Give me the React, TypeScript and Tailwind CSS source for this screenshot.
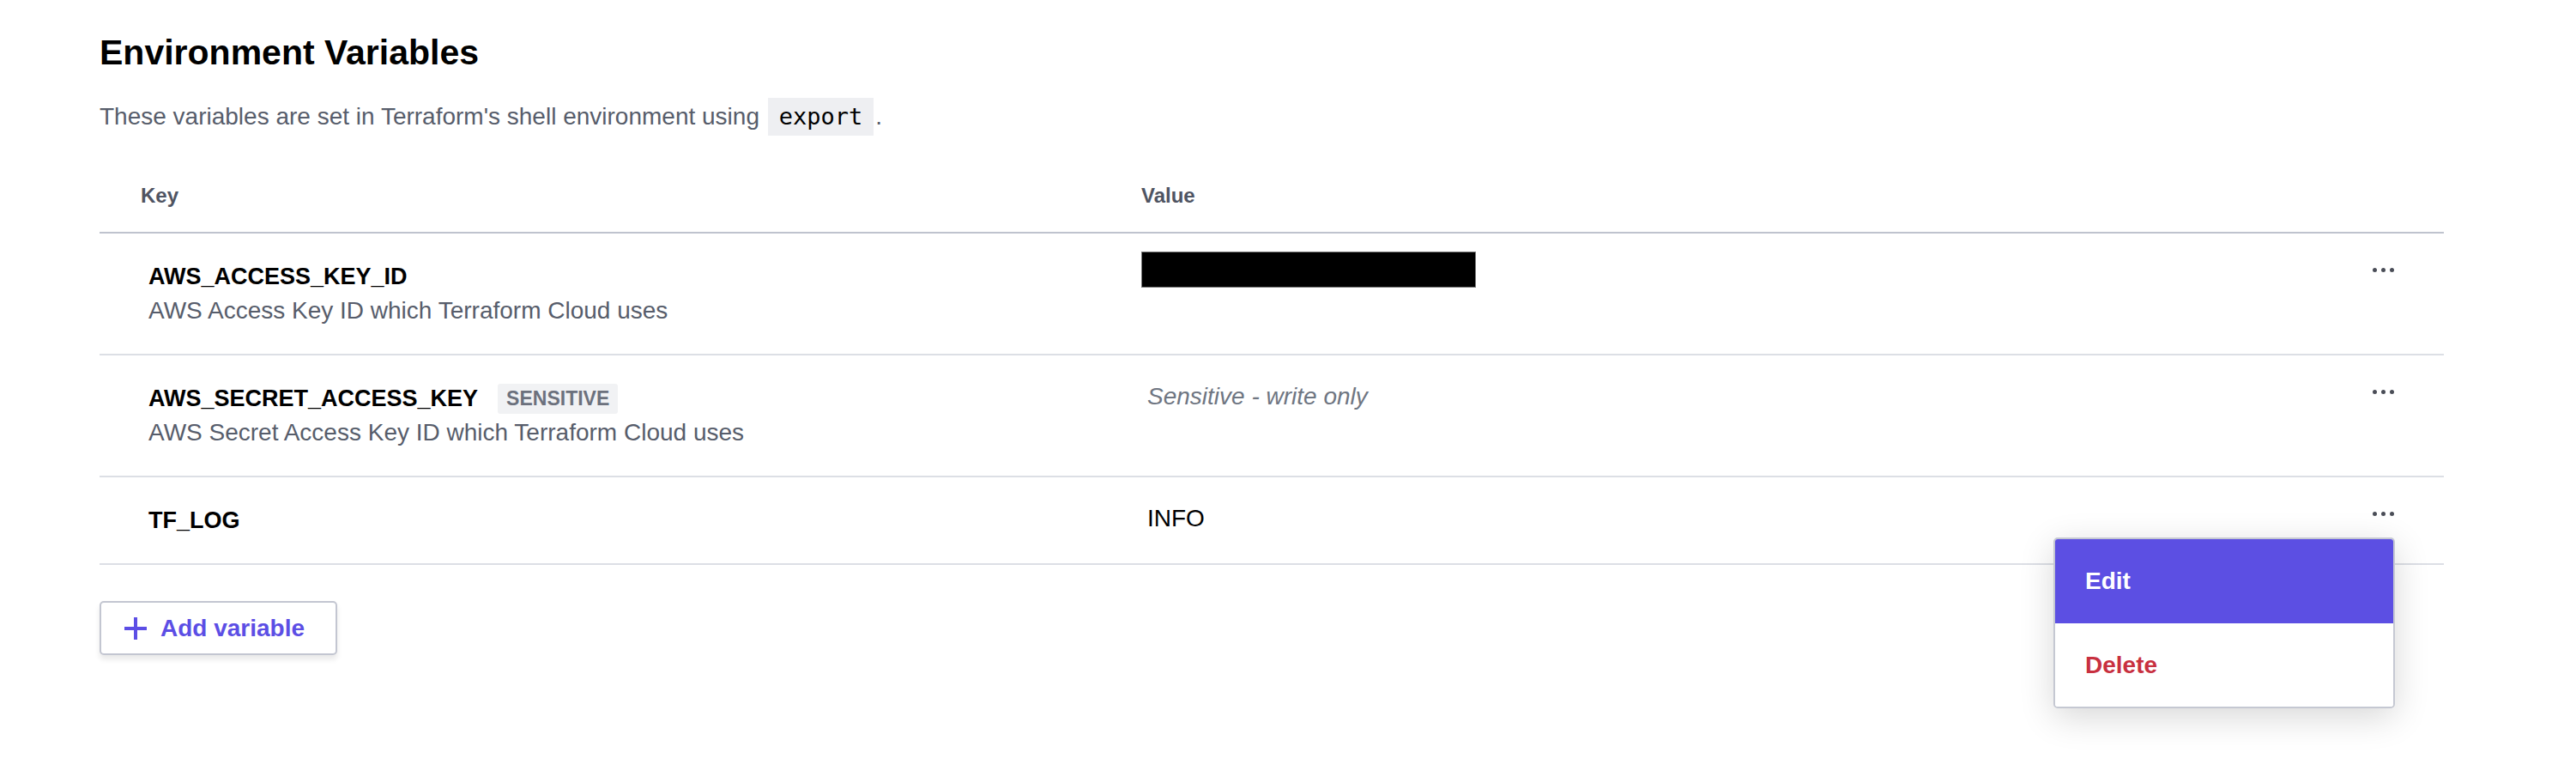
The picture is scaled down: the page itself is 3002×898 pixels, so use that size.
import React from "react";

const FONT = { fontFamily: '"Liberation Sans", Arial, Helvetica, sans-serif' };

function Dots() {
  return (
    <div className="flex items-center gap-[5px]">
      <span className="block w-[5px] h-[5px] rounded-full bg-[#4a4d57]" />
      <span className="block w-[5px] h-[5px] rounded-full bg-[#4a4d57]" />
      <span className="block w-[5px] h-[5px] rounded-full bg-[#4a4d57]" />
    </div>
  );
}

function Row({
  name,
  desc,
  badge,
  value,
  menu,
}: {
  name: string;
  desc?: string;
  badge?: boolean;
  value: React.ReactNode;
  menu?: boolean;
}) {
  return (
    <div className="flex border-b-2 border-[#dcdfe5]">
      <div className="w-[1214px] pl-[57px] py-[30px]">
        <div className="flex items-center h-[40px]">
          <span className="text-[27px] leading-[40px] font-bold text-black">{name}</span>
          {badge && (
            <span className="ml-[23px] h-[35px] px-[10px] flex items-center rounded-[3px] bg-[#f1f2f4] text-[23px] font-bold text-[#6c717d]">
              SENSITIVE
            </span>
          )}
        </div>
        {desc && <div className="text-[28px] leading-[40px] text-[#575d6b]">{desc}</div>}
      </div>
      <div className="flex-1 pt-[28px]">{value}</div>
      <div className="relative w-[140px] pt-[40px] pr-[58px] flex justify-end items-start">
        <Dots />
        {menu && (
          <div className="absolute top-[70px] right-[57px] w-[398px] bg-white border-2 border-[#c5c8d2] rounded-[5px] overflow-hidden shadow-[0_10px_40px_rgba(0,0,0,0.16)] z-10">
            <div className="h-[98px] flex items-center pl-[35px] bg-[#5c4fe3] text-white text-[28px] font-bold">
              Edit
            </div>
            <div className="h-[97px] flex items-center pl-[35px] bg-white text-[#c8303f] text-[28px] font-bold">
              Delete
            </div>
          </div>
        )}
      </div>
    </div>
  );
}

export default function App() {
  return (
    <div className="w-[3002px] h-[898px] bg-white overflow-hidden" style={FONT}>
      <div className="ml-[116px] w-[2732px] pt-[36px]">
        <h1 className="text-[41px] leading-[50px] font-bold text-black">Environment Variables</h1>
        <p className="mt-[28px] h-[44px] text-[28px] leading-[44px] text-[#575d6b] flex items-center">
          <span>These variables are set in Terraform's shell environment using&nbsp;</span>
          <code
            className="ml-[2px] h-[44px] px-[13px] flex items-center bg-[#eeeff2] text-[27px] text-black"
            style={{ fontFamily: '"DejaVu Sans Mono", Menlo, monospace' }}
          >
            export
          </code>
          <span className="ml-[2px]">.</span>
        </p>

        <div className="mt-[54px]">
          <div className="flex border-b-2 border-[#bfc3ce] pb-[26px]">
            <div className="w-[1214px] pl-[48px] text-[24px] leading-[32px] font-bold text-[#4f5462]">Key</div>
            <div className="flex-1 text-[24px] leading-[32px] font-bold text-[#4f5462]">Value</div>
            <div className="w-[140px]" />
          </div>

          <Row
            name="AWS_ACCESS_KEY_ID"
            desc="AWS Access Key ID which Terraform Cloud uses"
            value={
              <div className="-mt-[7px] w-[390px] h-[42px] bg-black border border-[#777]" />
            }
          />
          <Row
            name="AWS_SECRET_ACCESS_KEY"
            desc="AWS Secret Access Key ID which Terraform Cloud uses"
            badge
            value={
              <div className="pl-[7px] text-[28px] leading-[40px] italic text-[#6f7682]">
                Sensitive - write only
              </div>
            }
          />
          <Row
            name="TF_LOG"
            menu
            value={<div className="pl-[7px] text-[28px] leading-[40px] text-black">INFO</div>}
          />
        </div>

        <button className="mt-[42px] h-[63px] pl-[26px] pr-[36px] flex items-center gap-[15px] bg-white border-2 border-[#c3c6d1] rounded-[5px] shadow-[0_5px_6px_rgba(0,0,0,0.09)]">
          <svg width="28" height="28" viewBox="0 0 28 28">
            <path d="M14 1V27M1 14H27" stroke="#5c4ee5" strokeWidth="4" />
          </svg>
          <span className="text-[28px] leading-[40px] font-bold text-[#5c4ee5]">Add variable</span>
        </button>
      </div>
    </div>
  );
}
